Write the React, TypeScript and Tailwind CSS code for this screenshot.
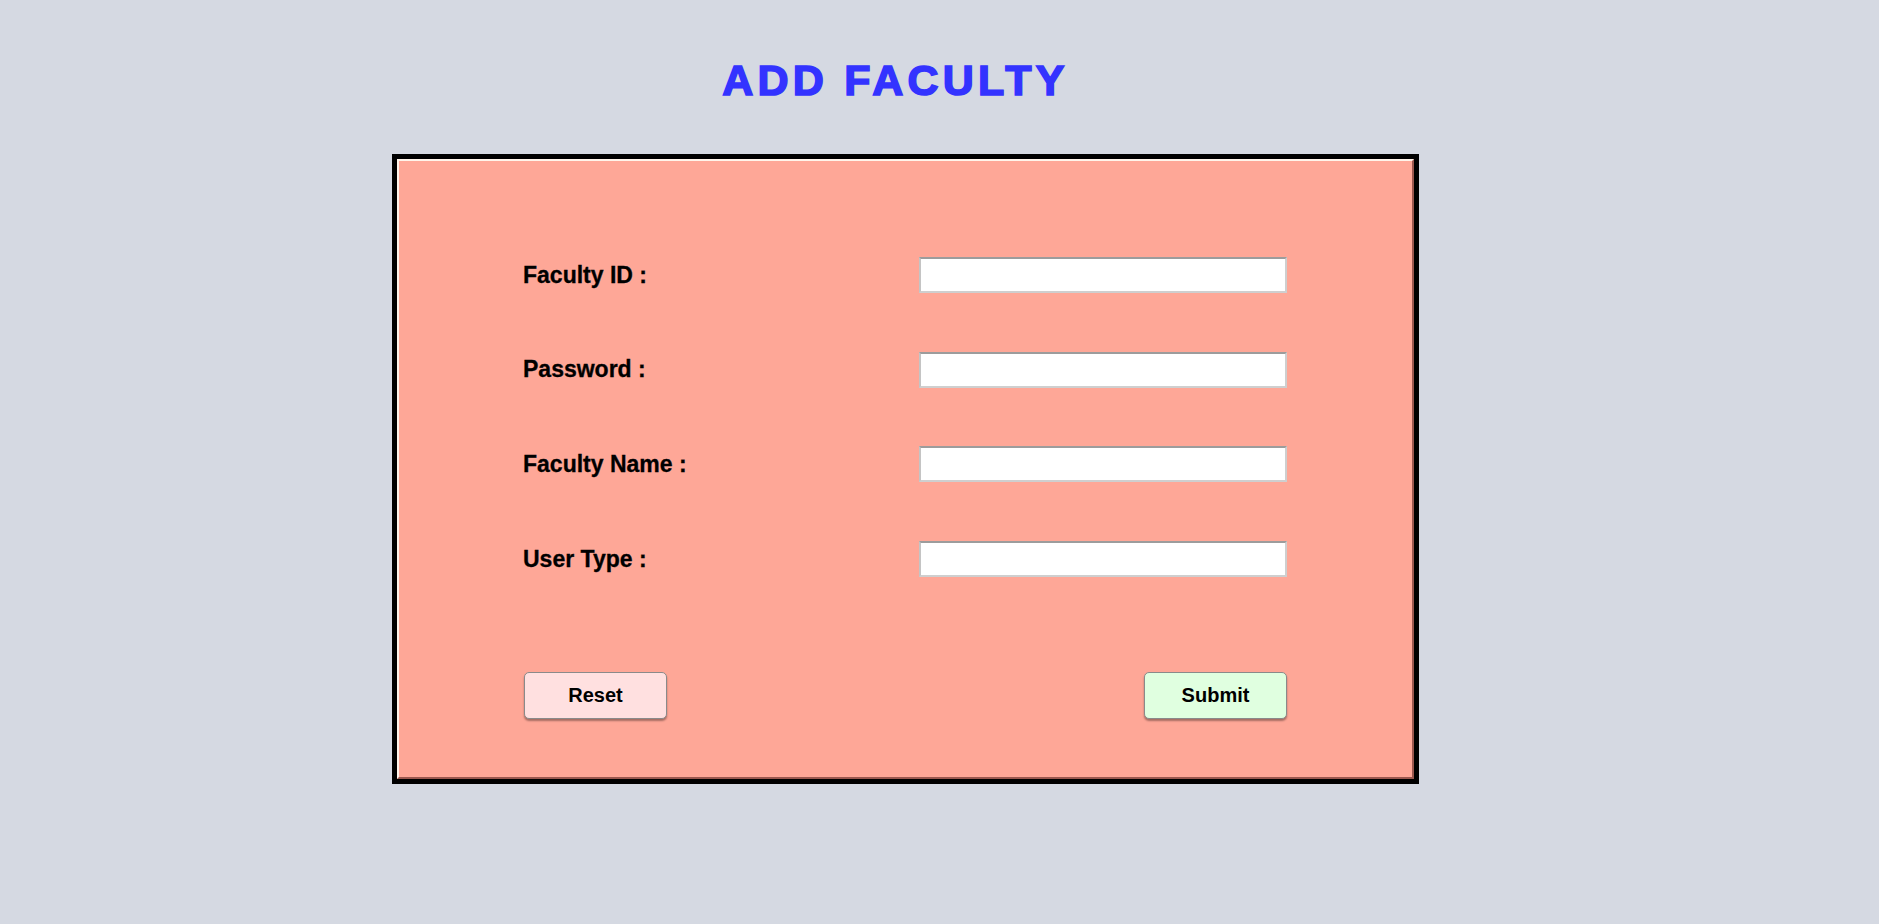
const fields = ["Faculty ID :", "Password :", "Faculty Name :", "User Type :"];

export default function App() {
  return (
    <main className="min-h-screen w-full bg-[#d5d9e2] font-['Liberation_Sans',Arial,sans-serif]">
      <div className="ml-[392px] w-[1027px] pt-[59px]">
        <h1 className="text-center text-[43px] leading-none font-bold tracking-[4.2px] text-[#3333ff] pr-[20px] [-webkit-text-stroke:1.6px_#3333ff]">
          ADD FACULTY
        </h1>

        <section className="mt-[52px] h-[630px] border-[5px] border-black bg-black">
          <div className="h-full border-2 border-t-[#fff4ea] border-l-[#fff4ea] border-b-[#9a574e] border-r-[#9a574e] bg-[#fea797] pl-[124px] pt-[96px]">
            <div className="flex flex-col gap-[58.6px]">
              {fields.map((label) => (
                <div key={label} className="flex items-center h-[36px]">
                  <label className="w-[396px] text-[23px] font-bold text-black [-webkit-text-stroke:0.3px_#000]">
                    {label}
                  </label>
                  <input
                    type="text"
                    className="h-[36px] w-[368px] bg-white border-2 border-t-[#9c9c9c] border-l-[#c4c4c4] border-r-[#cfcfcf] border-b-[#cfcfcf] outline-none"
                  />
                </div>
              ))}
            </div>

            <div className="mt-[95px] ml-[1px] flex w-[763px] justify-between">
              <button className="h-[47px] w-[143px] rounded-[5px] border border-[#8a8a8a] bg-[#ffe0e0] text-[20px] font-bold text-black shadow-[0_2px_2px_rgba(0,0,0,0.35)]">
                Reset
              </button>
              <button className="h-[47px] w-[143px] rounded-[5px] border border-[#8a8a8a] bg-[#e0ffe0] text-[20px] font-bold text-black shadow-[0_2px_2px_rgba(0,0,0,0.35)]">
                Submit
              </button>
            </div>
          </div>
        </section>
      </div>
    </main>
  );
}
